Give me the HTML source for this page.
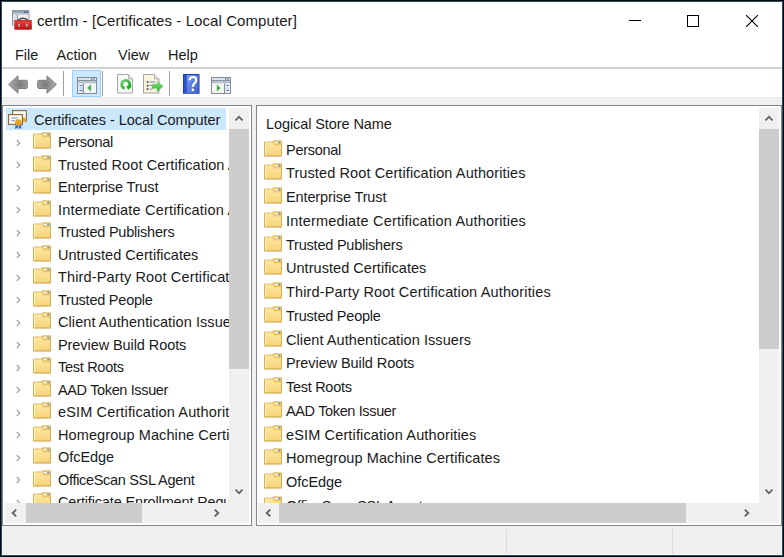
<!DOCTYPE html>
<html><head><meta charset="utf-8">
<style>
*{margin:0;padding:0;box-sizing:border-box}
html,body{width:784px;height:557px;overflow:hidden;background:#fff}
body{position:relative;font-family:"Liberation Sans",sans-serif;color:#000}
.a{position:absolute}
.t{position:absolute;white-space:nowrap;line-height:20px;font-size:14.5px;color:#1a1a1a}
.fold{position:absolute}
.chev{position:absolute}
</style></head><body>
<div class="a" style="left:0;top:0;width:784px;height:557px;background:#000"></div>
<div class="a" style="left:1px;top:1px;width:782px;height:555px;background:#1a5570"></div>
<div class="a" style="left:2px;top:2px;width:780px;height:553px;background:#fff"></div>
<svg class="a" style="left:12px;top:10px" width="21" height="21" viewBox="0 0 21 21">
<defs><linearGradient id="rb" x1="0" y1="0" x2="0" y2="1"><stop offset="0" stop-color="#e85050"/><stop offset="0.5" stop-color="#d02828"/><stop offset="1" stop-color="#b01515"/></linearGradient></defs>
<rect x="0.5" y="0.5" width="16.5" height="14.5" fill="#eef0f4" stroke="#8f97a6"/>
<rect x="1" y="1" width="16" height="2.6" fill="#9aa6ba"/>
<rect x="12" y="1.5" width="1.5" height="1.5" fill="#4a5a80"/><rect x="14.3" y="1.5" width="1.5" height="1.5" fill="#4a5a80"/>
<rect x="1" y="4" width="16" height="1" fill="#c9d0dc"/>
<rect x="1" y="5" width="4.3" height="9.5" fill="#dde2ea"/><rect x="5" y="5" width="0.8" height="10" fill="#6b7a96"/>
<path d="M6 10.2 Q11 6.2 16 10.2" fill="none" stroke="#4a4a4a" stroke-width="1.4"/>
<rect x="2.3" y="10.3" width="17.6" height="9.5" rx="1" fill="url(#rb)"/>
<rect x="2.3" y="10.3" width="17.6" height="1" fill="#c42020"/>
<ellipse cx="7" cy="15.2" rx="1" ry="1.6" fill="#a9bcbc"/><ellipse cx="14.8" cy="15.2" rx="1" ry="1.6" fill="#a9bcbc"/>
</svg>
<div class="t" style="left:37px;top:11.30px;font-size:15px;letter-spacing:0.08px">certlm - [Certificates - Local Computer]</div>
<div class="a" style="left:629px;top:20px;width:12px;height:1px;background:#000"></div>
<div class="a" style="left:687px;top:15px;width:12px;height:12px;border:1px solid #000"></div>
<svg class="a" style="left:746px;top:15px" width="12" height="12" viewBox="0 0 12 12"><path d="M0 0L12 12M12 0L0 12" stroke="#000" stroke-width="1.1"/></svg>
<div class="t" style="left:15.0px;top:45.28px">File</div>
<div class="t" style="left:56.5px;top:45.28px">Action</div>
<div class="t" style="left:118.0px;top:45.28px">View</div>
<div class="t" style="left:168.0px;top:45.28px">Help</div>
<div class="a" style="left:2px;top:67px;width:780px;height:2px;background:#cfcfcf"></div>
<svg class="a" style="left:8px;top:75px" width="20" height="19" viewBox="0 0 20 19">
<defs><radialGradient id="ag" cx="0.6" cy="0.5" r="0.6"><stop offset="0" stop-color="#787878"/><stop offset="0.6" stop-color="#9a9a9a"/><stop offset="1" stop-color="#bababa"/></radialGradient></defs>
<path d="M0.6 9.5 L10 0.8 V5.3 H18 Q19.3 5.3 19.3 6.6 V12.2 Q19.3 13.5 18 13.5 H10 V18.2 Z" fill="url(#ag)" stroke="#7c7c7c" stroke-width="1" stroke-linejoin="round"/></svg>
<svg class="a" style="left:37px;top:75px" width="20" height="19" viewBox="0 0 20 19">
<defs><radialGradient id="ag2" cx="0.4" cy="0.5" r="0.6"><stop offset="0" stop-color="#787878"/><stop offset="0.6" stop-color="#9a9a9a"/><stop offset="1" stop-color="#bababa"/></radialGradient></defs>
<path d="M19.4 9.5 L10 0.8 V5.3 H2 Q0.7 5.3 0.7 6.6 V12.2 Q0.7 13.5 2 13.5 H10 V18.2 Z" fill="url(#ag2)" stroke="#7c7c7c" stroke-width="1" stroke-linejoin="round"/></svg>
<div class="a" style="left:63px;top:71px;width:1px;height:25px;background:#a0a0a0"></div>
<div class="a" style="left:72px;top:70px;width:29px;height:27px;background:#cce8ff;border:1px solid #99d1ff"></div>
<svg class="a" style="left:77px;top:77px" width="20" height="17" viewBox="0 0 20 17">
<rect x="0.5" y="0.5" width="19" height="16" fill="#eef0f4" stroke="#858c99"/>
<rect x="1" y="1" width="18" height="2" fill="#dfe3ea"/>
<rect x="14" y="1.3" width="1.4" height="1.4" fill="#6b7385"/><rect x="16.3" y="1.3" width="1.4" height="1.4" fill="#6b7385"/>
<rect x="1" y="3" width="18" height="1.2" fill="#8a92a0"/>
<rect x="1" y="4.2" width="18" height="2.3" fill="#b9bfc9"/>
<rect x="1" y="6.5" width="4.6" height="9" fill="#eef1f5"/>
<rect x="5.6" y="6.5" width="1.4" height="9.5" fill="#8a92a0"/>
<rect x="7" y="6.5" width="12" height="9" fill="#f5f5f5"/>
<rect x="2.2" y="7.9" width="2.8" height="1" rx="0.5" fill="#3d73c4"/><rect x="2.2" y="10.4" width="2.8" height="1" rx="0.5" fill="#9fb5d8"/><rect x="2.2" y="12.9" width="2.8" height="1" rx="0.5" fill="#3d73c4"/>
<path d="M10.2 11 L14 7.6 V14.4 Z" fill="#3cb043"/></svg>
<div class="a" style="left:102px;top:71px;width:1px;height:25px;background:#a0a0a0"></div>
<svg class="a" style="left:117px;top:74px" width="17" height="20" viewBox="0 0 17 20">
<defs><linearGradient id="gr" x1="0" y1="0" x2="1" y2="1"><stop offset="0" stop-color="#6ad06a"/><stop offset="1" stop-color="#18a018"/></linearGradient></defs>
<path d="M0.5 0.5 H11.5 L15.5 4.5 V19 H0.5 Z" fill="#f7f7f7" stroke="#a8a8a8"/>
<path d="M11.5 0.5 V5 H16" fill="#e2e2e2" stroke="#b0b0b0"/>
<path d="M7.6 14.3 A4 4 0 1 1 12.3 12.3" fill="none" stroke="url(#gr)" stroke-width="2.8"/>
<path d="M9.3 11.4 L15 12.6 L11 16 Z" fill="#1cb01c"/></svg>
<svg class="a" style="left:143px;top:74px" width="21" height="20" viewBox="0 0 21 20">
<defs><linearGradient id="ge" x1="0" y1="0" x2="0" y2="1"><stop offset="0" stop-color="#86e086"/><stop offset="1" stop-color="#2db42d"/></linearGradient></defs>
<path d="M0.5 0.5 H11.5 L16 5 V19 H0.5 Z" fill="#fbf4dc" stroke="#a2a2a2"/>
<path d="M11.5 0.5 V5 H16" fill="#e8e2d0" stroke="#b0b0b0"/>
<rect x="3.8" y="7.2" width="1.6" height="1.6" fill="#333"/><rect x="6.5" y="7.5" width="6" height="1" fill="#8080c0"/>
<rect x="3.8" y="10.8" width="1.6" height="1.6" fill="#333"/><rect x="6.5" y="11" width="3" height="1" fill="#8080c0"/>
<rect x="3.8" y="14.3" width="1.6" height="1.6" fill="#333"/><rect x="6.5" y="14.6" width="3" height="1" fill="#8080c0"/>
<path d="M9 10 H14 V6.5 L20.3 12.3 L14 18 V14.6 H9 Z" fill="url(#ge)"/></svg>
<div class="a" style="left:169px;top:71px;width:1px;height:25px;background:#a0a0a0"></div>
<svg class="a" style="left:183px;top:74px" width="17" height="20" viewBox="0 0 17 20">
<defs><linearGradient id="hb" x1="0" y1="0" x2="1" y2="1"><stop offset="0" stop-color="#7a9cf0"/><stop offset="1" stop-color="#3d62d2"/></linearGradient></defs>
<rect x="0" y="0" width="16.5" height="19.8" fill="#1f3fb0"/>
<rect x="3.5" y="1" width="12" height="18" fill="url(#hb)"/>
<rect x="1" y="1" width="2.5" height="18" fill="#2b55c8"/>
<path d="M6.6 6.2 Q6.8 3 10 3 Q13.2 3 13.2 6 Q13.2 8.2 11.3 9.6 Q9.9 10.7 9.9 13" fill="none" stroke="#fff" stroke-width="2.2"/>
<circle cx="9.9" cy="15.9" r="1.35" fill="#fff"/></svg>
<svg class="a" style="left:211px;top:77px" width="20" height="17" viewBox="0 0 20 17">
<rect x="0.5" y="0.5" width="19" height="16" fill="#eef0f4" stroke="#858c99"/>
<rect x="1" y="1" width="18" height="2" fill="#dfe3ea"/>
<rect x="14" y="1.3" width="1.4" height="1.4" fill="#6b7385"/><rect x="16.3" y="1.3" width="1.4" height="1.4" fill="#6b7385"/>
<rect x="1" y="3" width="18" height="1.2" fill="#8a92a0"/>
<rect x="1" y="4.2" width="18" height="2.3" fill="#b9bfc9"/>
<rect x="1" y="6.5" width="12" height="9" fill="#f5f5f5"/>
<rect x="13" y="6.5" width="1.4" height="9.5" fill="#8a92a0"/>
<rect x="14.4" y="6.5" width="4.6" height="9" fill="#eef1f5"/>
<rect x="15.2" y="7.9" width="2.8" height="1" rx="0.5" fill="#3d73c4"/><rect x="15.2" y="10.4" width="2.8" height="1" rx="0.5" fill="#9fb5d8"/><rect x="15.2" y="12.9" width="2.8" height="1" rx="0.5" fill="#3d73c4"/>
<path d="M5.8 7.6 L9.6 11 L5.8 14.4 Z" fill="#3cb043"/></svg>
<div class="a" style="left:2px;top:97px;width:780px;height:458px;background:#f0f0f0"></div>
<div class="a" style="left:2px;top:97px;width:780px;height:1px;background:#e8e8e8"></div>
<div class="a" style="left:2px;top:105px;width:250px;height:421px;border:1px solid #828790;background:#fff;overflow:hidden">
<div class="a" style="left:0;top:0;width:226px;height:397px;overflow:hidden">
<div class="a" style="left:3px;top:2px;width:220px;height:22px;background:#cce8ff"></div>
<svg class="a" style="left:5px;top:4px" width="20" height="20" viewBox="0 0 20 20">
<rect x="4.5" y="0.5" width="14" height="10.5" fill="#fffdf5" stroke="#8a6f4a"/>
<rect x="5.5" y="1.5" width="12" height="8.5" fill="none" stroke="#e9d9b4" stroke-width="0.8"/>
<circle cx="15.6" cy="9.8" r="2.2" fill="#eaa21a"/>
<rect x="0.5" y="4.5" width="14" height="10" fill="#fffdf5" stroke="#8a6f4a"/>
<rect x="1.5" y="5.5" width="12" height="8" fill="none" stroke="#e9d9b4" stroke-width="0.8"/>
<rect x="3.3" y="7.4" width="6.5" height="1.2" fill="#8f9fd8"/><rect x="3.3" y="10" width="3.5" height="1.2" fill="#8f9fd8"/>
<path d="M7.6 14.2 L7 19 L8.8 18 L10 19 L10.2 14.2 Z M10.6 14.2 L11 19 L12.2 18 L13.6 19 L13 14.2Z" fill="#2f6fe0"/>
<circle cx="10.3" cy="12.6" r="3" fill="#f2b020" stroke="#d08a0c" stroke-width="0.7"/>
<circle cx="10.3" cy="12.6" r="1.4" fill="#e09a10"/></svg>
<div class="t" style="left:31px;top:4.28px;letter-spacing:-0.050px;">Certificates - Local Computer</div>
<svg class="chev" style="left:13.00px;top:32.60px" width="6" height="8" viewBox="0 0 6 8"><path d="M0.8 1 L3.8 4 L0.8 7" fill="none" stroke="#a0a0a0" stroke-width="1.1"/></svg>
<svg class="fold" style="left:30px;top:26.00px" width="18" height="17" viewBox="0 0 18 17"><defs><linearGradient id="fgt0" x1="0" y1="0" x2="0" y2="1"><stop offset="0" stop-color="#fee8a2"/><stop offset="1" stop-color="#f6d37a"/></linearGradient></defs>
<path d="M0.5 2.1 H8.6 L9.3 0.9 H17.5 V16.1 H0.5 Z" fill="#f1cf78" stroke="#d4ae58" stroke-width="1"/>
<rect x="9.6" y="1.4" width="7.4" height="4" fill="#e9c66a"/>
<path d="M1 2.6 H8.5 L9.8 5.4 H17 V15.6 H1 Z" fill="url(#fgt0)"/>
<rect x="1" y="2.6" width="1" height="13" fill="#fff2bc"/>
<rect x="10.6" y="2" width="3.6" height="1.2" fill="#fffbec"/>
<rect x="14.1" y="1.8" width="2.1" height="1.6" rx="0.8" fill="#4f94e6"/>
<rect x="0.5" y="15.3" width="17" height="0.8" fill="#cfa64e" opacity="0.6"/>
</svg>
<div class="t" style="left:55px;top:26.38px;letter-spacing:-0.286px;">Personal</div>
<svg class="chev" style="left:13.00px;top:55.10px" width="6" height="8" viewBox="0 0 6 8"><path d="M0.8 1 L3.8 4 L0.8 7" fill="none" stroke="#a0a0a0" stroke-width="1.1"/></svg>
<svg class="fold" style="left:30px;top:48.50px" width="18" height="17" viewBox="0 0 18 17"><defs><linearGradient id="fgt1" x1="0" y1="0" x2="0" y2="1"><stop offset="0" stop-color="#fee8a2"/><stop offset="1" stop-color="#f6d37a"/></linearGradient></defs>
<path d="M0.5 2.1 H8.6 L9.3 0.9 H17.5 V16.1 H0.5 Z" fill="#f1cf78" stroke="#d4ae58" stroke-width="1"/>
<rect x="9.6" y="1.4" width="7.4" height="4" fill="#e9c66a"/>
<path d="M1 2.6 H8.5 L9.8 5.4 H17 V15.6 H1 Z" fill="url(#fgt1)"/>
<rect x="1" y="2.6" width="1" height="13" fill="#fff2bc"/>
<rect x="10.6" y="2" width="3.6" height="1.2" fill="#fffbec"/>
<rect x="14.1" y="1.8" width="2.1" height="1.6" rx="0.8" fill="#4f94e6"/>
<rect x="0.5" y="15.3" width="17" height="0.8" fill="#cfa64e" opacity="0.6"/>
</svg>
<div class="t" style="left:55px;top:48.88px;letter-spacing:0.103px;">Trusted Root Certification Authorities</div>
<svg class="chev" style="left:13.00px;top:77.60px" width="6" height="8" viewBox="0 0 6 8"><path d="M0.8 1 L3.8 4 L0.8 7" fill="none" stroke="#a0a0a0" stroke-width="1.1"/></svg>
<svg class="fold" style="left:30px;top:71.00px" width="18" height="17" viewBox="0 0 18 17"><defs><linearGradient id="fgt2" x1="0" y1="0" x2="0" y2="1"><stop offset="0" stop-color="#fee8a2"/><stop offset="1" stop-color="#f6d37a"/></linearGradient></defs>
<path d="M0.5 2.1 H8.6 L9.3 0.9 H17.5 V16.1 H0.5 Z" fill="#f1cf78" stroke="#d4ae58" stroke-width="1"/>
<rect x="9.6" y="1.4" width="7.4" height="4" fill="#e9c66a"/>
<path d="M1 2.6 H8.5 L9.8 5.4 H17 V15.6 H1 Z" fill="url(#fgt2)"/>
<rect x="1" y="2.6" width="1" height="13" fill="#fff2bc"/>
<rect x="10.6" y="2" width="3.6" height="1.2" fill="#fffbec"/>
<rect x="14.1" y="1.8" width="2.1" height="1.6" rx="0.8" fill="#4f94e6"/>
<rect x="0.5" y="15.3" width="17" height="0.8" fill="#cfa64e" opacity="0.6"/>
</svg>
<div class="t" style="left:55px;top:71.38px;letter-spacing:-0.127px;">Enterprise Trust</div>
<svg class="chev" style="left:13.00px;top:100.10px" width="6" height="8" viewBox="0 0 6 8"><path d="M0.8 1 L3.8 4 L0.8 7" fill="none" stroke="#a0a0a0" stroke-width="1.1"/></svg>
<svg class="fold" style="left:30px;top:93.50px" width="18" height="17" viewBox="0 0 18 17"><defs><linearGradient id="fgt3" x1="0" y1="0" x2="0" y2="1"><stop offset="0" stop-color="#fee8a2"/><stop offset="1" stop-color="#f6d37a"/></linearGradient></defs>
<path d="M0.5 2.1 H8.6 L9.3 0.9 H17.5 V16.1 H0.5 Z" fill="#f1cf78" stroke="#d4ae58" stroke-width="1"/>
<rect x="9.6" y="1.4" width="7.4" height="4" fill="#e9c66a"/>
<path d="M1 2.6 H8.5 L9.8 5.4 H17 V15.6 H1 Z" fill="url(#fgt3)"/>
<rect x="1" y="2.6" width="1" height="13" fill="#fff2bc"/>
<rect x="10.6" y="2" width="3.6" height="1.2" fill="#fffbec"/>
<rect x="14.1" y="1.8" width="2.1" height="1.6" rx="0.8" fill="#4f94e6"/>
<rect x="0.5" y="15.3" width="17" height="0.8" fill="#cfa64e" opacity="0.6"/>
</svg>
<div class="t" style="left:55px;top:93.88px;letter-spacing:0.184px;">Intermediate Certification Authorities</div>
<svg class="chev" style="left:13.00px;top:122.60px" width="6" height="8" viewBox="0 0 6 8"><path d="M0.8 1 L3.8 4 L0.8 7" fill="none" stroke="#a0a0a0" stroke-width="1.1"/></svg>
<svg class="fold" style="left:30px;top:116.00px" width="18" height="17" viewBox="0 0 18 17"><defs><linearGradient id="fgt4" x1="0" y1="0" x2="0" y2="1"><stop offset="0" stop-color="#fee8a2"/><stop offset="1" stop-color="#f6d37a"/></linearGradient></defs>
<path d="M0.5 2.1 H8.6 L9.3 0.9 H17.5 V16.1 H0.5 Z" fill="#f1cf78" stroke="#d4ae58" stroke-width="1"/>
<rect x="9.6" y="1.4" width="7.4" height="4" fill="#e9c66a"/>
<path d="M1 2.6 H8.5 L9.8 5.4 H17 V15.6 H1 Z" fill="url(#fgt4)"/>
<rect x="1" y="2.6" width="1" height="13" fill="#fff2bc"/>
<rect x="10.6" y="2" width="3.6" height="1.2" fill="#fffbec"/>
<rect x="14.1" y="1.8" width="2.1" height="1.6" rx="0.8" fill="#4f94e6"/>
<rect x="0.5" y="15.3" width="17" height="0.8" fill="#cfa64e" opacity="0.6"/>
</svg>
<div class="t" style="left:55px;top:116.38px;letter-spacing:-0.218px;">Trusted Publishers</div>
<svg class="chev" style="left:13.00px;top:145.10px" width="6" height="8" viewBox="0 0 6 8"><path d="M0.8 1 L3.8 4 L0.8 7" fill="none" stroke="#a0a0a0" stroke-width="1.1"/></svg>
<svg class="fold" style="left:30px;top:138.50px" width="18" height="17" viewBox="0 0 18 17"><defs><linearGradient id="fgt5" x1="0" y1="0" x2="0" y2="1"><stop offset="0" stop-color="#fee8a2"/><stop offset="1" stop-color="#f6d37a"/></linearGradient></defs>
<path d="M0.5 2.1 H8.6 L9.3 0.9 H17.5 V16.1 H0.5 Z" fill="#f1cf78" stroke="#d4ae58" stroke-width="1"/>
<rect x="9.6" y="1.4" width="7.4" height="4" fill="#e9c66a"/>
<path d="M1 2.6 H8.5 L9.8 5.4 H17 V15.6 H1 Z" fill="url(#fgt5)"/>
<rect x="1" y="2.6" width="1" height="13" fill="#fff2bc"/>
<rect x="10.6" y="2" width="3.6" height="1.2" fill="#fffbec"/>
<rect x="14.1" y="1.8" width="2.1" height="1.6" rx="0.8" fill="#4f94e6"/>
<rect x="0.5" y="15.3" width="17" height="0.8" fill="#cfa64e" opacity="0.6"/>
</svg>
<div class="t" style="left:55px;top:138.88px;letter-spacing:0.043px;">Untrusted Certificates</div>
<svg class="chev" style="left:13.00px;top:167.60px" width="6" height="8" viewBox="0 0 6 8"><path d="M0.8 1 L3.8 4 L0.8 7" fill="none" stroke="#a0a0a0" stroke-width="1.1"/></svg>
<svg class="fold" style="left:30px;top:161.00px" width="18" height="17" viewBox="0 0 18 17"><defs><linearGradient id="fgt6" x1="0" y1="0" x2="0" y2="1"><stop offset="0" stop-color="#fee8a2"/><stop offset="1" stop-color="#f6d37a"/></linearGradient></defs>
<path d="M0.5 2.1 H8.6 L9.3 0.9 H17.5 V16.1 H0.5 Z" fill="#f1cf78" stroke="#d4ae58" stroke-width="1"/>
<rect x="9.6" y="1.4" width="7.4" height="4" fill="#e9c66a"/>
<path d="M1 2.6 H8.5 L9.8 5.4 H17 V15.6 H1 Z" fill="url(#fgt6)"/>
<rect x="1" y="2.6" width="1" height="13" fill="#fff2bc"/>
<rect x="10.6" y="2" width="3.6" height="1.2" fill="#fffbec"/>
<rect x="14.1" y="1.8" width="2.1" height="1.6" rx="0.8" fill="#4f94e6"/>
<rect x="0.5" y="15.3" width="17" height="0.8" fill="#cfa64e" opacity="0.6"/>
</svg>
<div class="t" style="left:55px;top:161.38px;letter-spacing:0.146px;">Third-Party Root Certification Authorities</div>
<svg class="chev" style="left:13.00px;top:190.10px" width="6" height="8" viewBox="0 0 6 8"><path d="M0.8 1 L3.8 4 L0.8 7" fill="none" stroke="#a0a0a0" stroke-width="1.1"/></svg>
<svg class="fold" style="left:30px;top:183.50px" width="18" height="17" viewBox="0 0 18 17"><defs><linearGradient id="fgt7" x1="0" y1="0" x2="0" y2="1"><stop offset="0" stop-color="#fee8a2"/><stop offset="1" stop-color="#f6d37a"/></linearGradient></defs>
<path d="M0.5 2.1 H8.6 L9.3 0.9 H17.5 V16.1 H0.5 Z" fill="#f1cf78" stroke="#d4ae58" stroke-width="1"/>
<rect x="9.6" y="1.4" width="7.4" height="4" fill="#e9c66a"/>
<path d="M1 2.6 H8.5 L9.8 5.4 H17 V15.6 H1 Z" fill="url(#fgt7)"/>
<rect x="1" y="2.6" width="1" height="13" fill="#fff2bc"/>
<rect x="10.6" y="2" width="3.6" height="1.2" fill="#fffbec"/>
<rect x="14.1" y="1.8" width="2.1" height="1.6" rx="0.8" fill="#4f94e6"/>
<rect x="0.5" y="15.3" width="17" height="0.8" fill="#cfa64e" opacity="0.6"/>
</svg>
<div class="t" style="left:55px;top:183.88px;letter-spacing:-0.223px;">Trusted People</div>
<svg class="chev" style="left:13.00px;top:212.60px" width="6" height="8" viewBox="0 0 6 8"><path d="M0.8 1 L3.8 4 L0.8 7" fill="none" stroke="#a0a0a0" stroke-width="1.1"/></svg>
<svg class="fold" style="left:30px;top:206.00px" width="18" height="17" viewBox="0 0 18 17"><defs><linearGradient id="fgt8" x1="0" y1="0" x2="0" y2="1"><stop offset="0" stop-color="#fee8a2"/><stop offset="1" stop-color="#f6d37a"/></linearGradient></defs>
<path d="M0.5 2.1 H8.6 L9.3 0.9 H17.5 V16.1 H0.5 Z" fill="#f1cf78" stroke="#d4ae58" stroke-width="1"/>
<rect x="9.6" y="1.4" width="7.4" height="4" fill="#e9c66a"/>
<path d="M1 2.6 H8.5 L9.8 5.4 H17 V15.6 H1 Z" fill="url(#fgt8)"/>
<rect x="1" y="2.6" width="1" height="13" fill="#fff2bc"/>
<rect x="10.6" y="2" width="3.6" height="1.2" fill="#fffbec"/>
<rect x="14.1" y="1.8" width="2.1" height="1.6" rx="0.8" fill="#4f94e6"/>
<rect x="0.5" y="15.3" width="17" height="0.8" fill="#cfa64e" opacity="0.6"/>
</svg>
<div class="t" style="left:55px;top:206.38px;letter-spacing:0.075px;">Client Authentication Issuers</div>
<svg class="chev" style="left:13.00px;top:235.10px" width="6" height="8" viewBox="0 0 6 8"><path d="M0.8 1 L3.8 4 L0.8 7" fill="none" stroke="#a0a0a0" stroke-width="1.1"/></svg>
<svg class="fold" style="left:30px;top:228.50px" width="18" height="17" viewBox="0 0 18 17"><defs><linearGradient id="fgt9" x1="0" y1="0" x2="0" y2="1"><stop offset="0" stop-color="#fee8a2"/><stop offset="1" stop-color="#f6d37a"/></linearGradient></defs>
<path d="M0.5 2.1 H8.6 L9.3 0.9 H17.5 V16.1 H0.5 Z" fill="#f1cf78" stroke="#d4ae58" stroke-width="1"/>
<rect x="9.6" y="1.4" width="7.4" height="4" fill="#e9c66a"/>
<path d="M1 2.6 H8.5 L9.8 5.4 H17 V15.6 H1 Z" fill="url(#fgt9)"/>
<rect x="1" y="2.6" width="1" height="13" fill="#fff2bc"/>
<rect x="10.6" y="2" width="3.6" height="1.2" fill="#fffbec"/>
<rect x="14.1" y="1.8" width="2.1" height="1.6" rx="0.8" fill="#4f94e6"/>
<rect x="0.5" y="15.3" width="17" height="0.8" fill="#cfa64e" opacity="0.6"/>
</svg>
<div class="t" style="left:55px;top:228.88px;letter-spacing:-0.078px;">Preview Build Roots</div>
<svg class="chev" style="left:13.00px;top:257.60px" width="6" height="8" viewBox="0 0 6 8"><path d="M0.8 1 L3.8 4 L0.8 7" fill="none" stroke="#a0a0a0" stroke-width="1.1"/></svg>
<svg class="fold" style="left:30px;top:251.00px" width="18" height="17" viewBox="0 0 18 17"><defs><linearGradient id="fgt10" x1="0" y1="0" x2="0" y2="1"><stop offset="0" stop-color="#fee8a2"/><stop offset="1" stop-color="#f6d37a"/></linearGradient></defs>
<path d="M0.5 2.1 H8.6 L9.3 0.9 H17.5 V16.1 H0.5 Z" fill="#f1cf78" stroke="#d4ae58" stroke-width="1"/>
<rect x="9.6" y="1.4" width="7.4" height="4" fill="#e9c66a"/>
<path d="M1 2.6 H8.5 L9.8 5.4 H17 V15.6 H1 Z" fill="url(#fgt10)"/>
<rect x="1" y="2.6" width="1" height="13" fill="#fff2bc"/>
<rect x="10.6" y="2" width="3.6" height="1.2" fill="#fffbec"/>
<rect x="14.1" y="1.8" width="2.1" height="1.6" rx="0.8" fill="#4f94e6"/>
<rect x="0.5" y="15.3" width="17" height="0.8" fill="#cfa64e" opacity="0.6"/>
</svg>
<div class="t" style="left:55px;top:251.38px;letter-spacing:-0.289px;">Test Roots</div>
<svg class="chev" style="left:13.00px;top:280.10px" width="6" height="8" viewBox="0 0 6 8"><path d="M0.8 1 L3.8 4 L0.8 7" fill="none" stroke="#a0a0a0" stroke-width="1.1"/></svg>
<svg class="fold" style="left:30px;top:273.50px" width="18" height="17" viewBox="0 0 18 17"><defs><linearGradient id="fgt11" x1="0" y1="0" x2="0" y2="1"><stop offset="0" stop-color="#fee8a2"/><stop offset="1" stop-color="#f6d37a"/></linearGradient></defs>
<path d="M0.5 2.1 H8.6 L9.3 0.9 H17.5 V16.1 H0.5 Z" fill="#f1cf78" stroke="#d4ae58" stroke-width="1"/>
<rect x="9.6" y="1.4" width="7.4" height="4" fill="#e9c66a"/>
<path d="M1 2.6 H8.5 L9.8 5.4 H17 V15.6 H1 Z" fill="url(#fgt11)"/>
<rect x="1" y="2.6" width="1" height="13" fill="#fff2bc"/>
<rect x="10.6" y="2" width="3.6" height="1.2" fill="#fffbec"/>
<rect x="14.1" y="1.8" width="2.1" height="1.6" rx="0.8" fill="#4f94e6"/>
<rect x="0.5" y="15.3" width="17" height="0.8" fill="#cfa64e" opacity="0.6"/>
</svg>
<div class="t" style="left:55px;top:273.88px;letter-spacing:-0.360px;">AAD Token Issuer</div>
<svg class="chev" style="left:13.00px;top:302.60px" width="6" height="8" viewBox="0 0 6 8"><path d="M0.8 1 L3.8 4 L0.8 7" fill="none" stroke="#a0a0a0" stroke-width="1.1"/></svg>
<svg class="fold" style="left:30px;top:296.00px" width="18" height="17" viewBox="0 0 18 17"><defs><linearGradient id="fgt12" x1="0" y1="0" x2="0" y2="1"><stop offset="0" stop-color="#fee8a2"/><stop offset="1" stop-color="#f6d37a"/></linearGradient></defs>
<path d="M0.5 2.1 H8.6 L9.3 0.9 H17.5 V16.1 H0.5 Z" fill="#f1cf78" stroke="#d4ae58" stroke-width="1"/>
<rect x="9.6" y="1.4" width="7.4" height="4" fill="#e9c66a"/>
<path d="M1 2.6 H8.5 L9.8 5.4 H17 V15.6 H1 Z" fill="url(#fgt12)"/>
<rect x="1" y="2.6" width="1" height="13" fill="#fff2bc"/>
<rect x="10.6" y="2" width="3.6" height="1.2" fill="#fffbec"/>
<rect x="14.1" y="1.8" width="2.1" height="1.6" rx="0.8" fill="#4f94e6"/>
<rect x="0.5" y="15.3" width="17" height="0.8" fill="#cfa64e" opacity="0.6"/>
</svg>
<div class="t" style="left:55px;top:296.38px;letter-spacing:0.141px;">eSIM Certification Authorities</div>
<svg class="chev" style="left:13.00px;top:325.10px" width="6" height="8" viewBox="0 0 6 8"><path d="M0.8 1 L3.8 4 L0.8 7" fill="none" stroke="#a0a0a0" stroke-width="1.1"/></svg>
<svg class="fold" style="left:30px;top:318.50px" width="18" height="17" viewBox="0 0 18 17"><defs><linearGradient id="fgt13" x1="0" y1="0" x2="0" y2="1"><stop offset="0" stop-color="#fee8a2"/><stop offset="1" stop-color="#f6d37a"/></linearGradient></defs>
<path d="M0.5 2.1 H8.6 L9.3 0.9 H17.5 V16.1 H0.5 Z" fill="#f1cf78" stroke="#d4ae58" stroke-width="1"/>
<rect x="9.6" y="1.4" width="7.4" height="4" fill="#e9c66a"/>
<path d="M1 2.6 H8.5 L9.8 5.4 H17 V15.6 H1 Z" fill="url(#fgt13)"/>
<rect x="1" y="2.6" width="1" height="13" fill="#fff2bc"/>
<rect x="10.6" y="2" width="3.6" height="1.2" fill="#fffbec"/>
<rect x="14.1" y="1.8" width="2.1" height="1.6" rx="0.8" fill="#4f94e6"/>
<rect x="0.5" y="15.3" width="17" height="0.8" fill="#cfa64e" opacity="0.6"/>
</svg>
<div class="t" style="left:55px;top:318.88px;letter-spacing:0.097px;">Homegroup Machine Certificates</div>
<svg class="chev" style="left:13.00px;top:347.60px" width="6" height="8" viewBox="0 0 6 8"><path d="M0.8 1 L3.8 4 L0.8 7" fill="none" stroke="#a0a0a0" stroke-width="1.1"/></svg>
<svg class="fold" style="left:30px;top:341.00px" width="18" height="17" viewBox="0 0 18 17"><defs><linearGradient id="fgt14" x1="0" y1="0" x2="0" y2="1"><stop offset="0" stop-color="#fee8a2"/><stop offset="1" stop-color="#f6d37a"/></linearGradient></defs>
<path d="M0.5 2.1 H8.6 L9.3 0.9 H17.5 V16.1 H0.5 Z" fill="#f1cf78" stroke="#d4ae58" stroke-width="1"/>
<rect x="9.6" y="1.4" width="7.4" height="4" fill="#e9c66a"/>
<path d="M1 2.6 H8.5 L9.8 5.4 H17 V15.6 H1 Z" fill="url(#fgt14)"/>
<rect x="1" y="2.6" width="1" height="13" fill="#fff2bc"/>
<rect x="10.6" y="2" width="3.6" height="1.2" fill="#fffbec"/>
<rect x="14.1" y="1.8" width="2.1" height="1.6" rx="0.8" fill="#4f94e6"/>
<rect x="0.5" y="15.3" width="17" height="0.8" fill="#cfa64e" opacity="0.6"/>
</svg>
<div class="t" style="left:55px;top:341.38px;letter-spacing:-0.050px;">OfcEdge</div>
<svg class="chev" style="left:13.00px;top:370.10px" width="6" height="8" viewBox="0 0 6 8"><path d="M0.8 1 L3.8 4 L0.8 7" fill="none" stroke="#a0a0a0" stroke-width="1.1"/></svg>
<svg class="fold" style="left:30px;top:363.50px" width="18" height="17" viewBox="0 0 18 17"><defs><linearGradient id="fgt15" x1="0" y1="0" x2="0" y2="1"><stop offset="0" stop-color="#fee8a2"/><stop offset="1" stop-color="#f6d37a"/></linearGradient></defs>
<path d="M0.5 2.1 H8.6 L9.3 0.9 H17.5 V16.1 H0.5 Z" fill="#f1cf78" stroke="#d4ae58" stroke-width="1"/>
<rect x="9.6" y="1.4" width="7.4" height="4" fill="#e9c66a"/>
<path d="M1 2.6 H8.5 L9.8 5.4 H17 V15.6 H1 Z" fill="url(#fgt15)"/>
<rect x="1" y="2.6" width="1" height="13" fill="#fff2bc"/>
<rect x="10.6" y="2" width="3.6" height="1.2" fill="#fffbec"/>
<rect x="14.1" y="1.8" width="2.1" height="1.6" rx="0.8" fill="#4f94e6"/>
<rect x="0.5" y="15.3" width="17" height="0.8" fill="#cfa64e" opacity="0.6"/>
</svg>
<div class="t" style="left:55px;top:363.88px;letter-spacing:-0.316px;">OfficeScan SSL Agent</div>
<svg class="chev" style="left:13.00px;top:392.60px" width="6" height="8" viewBox="0 0 6 8"><path d="M0.8 1 L3.8 4 L0.8 7" fill="none" stroke="#a0a0a0" stroke-width="1.1"/></svg>
<svg class="fold" style="left:30px;top:386.00px" width="18" height="17" viewBox="0 0 18 17"><defs><linearGradient id="fgt16" x1="0" y1="0" x2="0" y2="1"><stop offset="0" stop-color="#fee8a2"/><stop offset="1" stop-color="#f6d37a"/></linearGradient></defs>
<path d="M0.5 2.1 H8.6 L9.3 0.9 H17.5 V16.1 H0.5 Z" fill="#f1cf78" stroke="#d4ae58" stroke-width="1"/>
<rect x="9.6" y="1.4" width="7.4" height="4" fill="#e9c66a"/>
<path d="M1 2.6 H8.5 L9.8 5.4 H17 V15.6 H1 Z" fill="url(#fgt16)"/>
<rect x="1" y="2.6" width="1" height="13" fill="#fff2bc"/>
<rect x="10.6" y="2" width="3.6" height="1.2" fill="#fffbec"/>
<rect x="14.1" y="1.8" width="2.1" height="1.6" rx="0.8" fill="#4f94e6"/>
<rect x="0.5" y="15.3" width="17" height="0.8" fill="#cfa64e" opacity="0.6"/>
</svg>
<div class="t" style="left:55px;top:386.38px;letter-spacing:-0.150px;">Certificate Enrollment Requests</div>
</div>
<div class="a" style="left:226px;top:2px;width:20px;height:415px;background:#f0f0f0"></div>
<div class="a" style="left:226px;top:23px;width:20px;height:240px;background:#cdcdcd"></div>
<div class="a" style="left:2px;top:397px;width:224px;height:20px;background:#f0f0f0"></div>
<div class="a" style="left:23px;top:397px;width:116px;height:20px;background:#cdcdcd"></div>
<svg class="a" style="left:230.70px;top:8.00px" width="10" height="8" viewBox="0 0 10 8"><path d="M1.6 6.3 L5 2.7 L8.4 6.3" fill="none" stroke="#606060" stroke-width="1.8"/></svg>
<svg class="a" style="left:230.80px;top:382.00px" width="10" height="8" viewBox="0 0 10 8"><path d="M1.6 1.7 L5 5.3 L8.4 1.7" fill="none" stroke="#606060" stroke-width="1.8"/></svg>
<svg class="a" style="left:7.20px;top:401.50px" width="8" height="10" viewBox="0 0 8 10"><path d="M6.2 1.7 L2.7 5 L6.2 8.3" fill="none" stroke="#606060" stroke-width="1.8"/></svg>
<svg class="a" style="left:209.50px;top:401.50px" width="8" height="10" viewBox="0 0 8 10"><path d="M1.8 1.7 L5.3 5 L1.8 8.3" fill="none" stroke="#606060" stroke-width="1.8"/></svg>
</div>
<div class="a" style="left:256px;top:105px;width:526px;height:421px;border:1px solid #828790;background:#fff;overflow:hidden">
<div class="a" style="left:0;top:0;width:502px;height:397px;overflow:hidden">
<div class="t" style="left:9px;top:7.68px;letter-spacing:-0.088px;">Logical Store Name</div>
<svg class="fold" style="left:7px;top:33.60px" width="18" height="17" viewBox="0 0 18 17"><defs><linearGradient id="fgl0" x1="0" y1="0" x2="0" y2="1"><stop offset="0" stop-color="#fee8a2"/><stop offset="1" stop-color="#f6d37a"/></linearGradient></defs>
<path d="M0.5 2.1 H8.6 L9.3 0.9 H17.5 V16.1 H0.5 Z" fill="#f1cf78" stroke="#d4ae58" stroke-width="1"/>
<rect x="9.6" y="1.4" width="7.4" height="4" fill="#e9c66a"/>
<path d="M1 2.6 H8.5 L9.8 5.4 H17 V15.6 H1 Z" fill="url(#fgl0)"/>
<rect x="1" y="2.6" width="1" height="13" fill="#fff2bc"/>
<rect x="10.6" y="2" width="3.6" height="1.2" fill="#fffbec"/>
<rect x="14.1" y="1.8" width="2.1" height="1.6" rx="0.8" fill="#4f94e6"/>
<rect x="0.5" y="15.3" width="17" height="0.8" fill="#cfa64e" opacity="0.6"/>
</svg>
<div class="t" style="left:29px;top:33.58px;letter-spacing:-0.286px;">Personal</div>
<svg class="fold" style="left:7px;top:57.35px" width="18" height="17" viewBox="0 0 18 17"><defs><linearGradient id="fgl1" x1="0" y1="0" x2="0" y2="1"><stop offset="0" stop-color="#fee8a2"/><stop offset="1" stop-color="#f6d37a"/></linearGradient></defs>
<path d="M0.5 2.1 H8.6 L9.3 0.9 H17.5 V16.1 H0.5 Z" fill="#f1cf78" stroke="#d4ae58" stroke-width="1"/>
<rect x="9.6" y="1.4" width="7.4" height="4" fill="#e9c66a"/>
<path d="M1 2.6 H8.5 L9.8 5.4 H17 V15.6 H1 Z" fill="url(#fgl1)"/>
<rect x="1" y="2.6" width="1" height="13" fill="#fff2bc"/>
<rect x="10.6" y="2" width="3.6" height="1.2" fill="#fffbec"/>
<rect x="14.1" y="1.8" width="2.1" height="1.6" rx="0.8" fill="#4f94e6"/>
<rect x="0.5" y="15.3" width="17" height="0.8" fill="#cfa64e" opacity="0.6"/>
</svg>
<div class="t" style="left:29px;top:57.33px;letter-spacing:0.103px;">Trusted Root Certification Authorities</div>
<svg class="fold" style="left:7px;top:81.10px" width="18" height="17" viewBox="0 0 18 17"><defs><linearGradient id="fgl2" x1="0" y1="0" x2="0" y2="1"><stop offset="0" stop-color="#fee8a2"/><stop offset="1" stop-color="#f6d37a"/></linearGradient></defs>
<path d="M0.5 2.1 H8.6 L9.3 0.9 H17.5 V16.1 H0.5 Z" fill="#f1cf78" stroke="#d4ae58" stroke-width="1"/>
<rect x="9.6" y="1.4" width="7.4" height="4" fill="#e9c66a"/>
<path d="M1 2.6 H8.5 L9.8 5.4 H17 V15.6 H1 Z" fill="url(#fgl2)"/>
<rect x="1" y="2.6" width="1" height="13" fill="#fff2bc"/>
<rect x="10.6" y="2" width="3.6" height="1.2" fill="#fffbec"/>
<rect x="14.1" y="1.8" width="2.1" height="1.6" rx="0.8" fill="#4f94e6"/>
<rect x="0.5" y="15.3" width="17" height="0.8" fill="#cfa64e" opacity="0.6"/>
</svg>
<div class="t" style="left:29px;top:81.08px;letter-spacing:-0.127px;">Enterprise Trust</div>
<svg class="fold" style="left:7px;top:104.85px" width="18" height="17" viewBox="0 0 18 17"><defs><linearGradient id="fgl3" x1="0" y1="0" x2="0" y2="1"><stop offset="0" stop-color="#fee8a2"/><stop offset="1" stop-color="#f6d37a"/></linearGradient></defs>
<path d="M0.5 2.1 H8.6 L9.3 0.9 H17.5 V16.1 H0.5 Z" fill="#f1cf78" stroke="#d4ae58" stroke-width="1"/>
<rect x="9.6" y="1.4" width="7.4" height="4" fill="#e9c66a"/>
<path d="M1 2.6 H8.5 L9.8 5.4 H17 V15.6 H1 Z" fill="url(#fgl3)"/>
<rect x="1" y="2.6" width="1" height="13" fill="#fff2bc"/>
<rect x="10.6" y="2" width="3.6" height="1.2" fill="#fffbec"/>
<rect x="14.1" y="1.8" width="2.1" height="1.6" rx="0.8" fill="#4f94e6"/>
<rect x="0.5" y="15.3" width="17" height="0.8" fill="#cfa64e" opacity="0.6"/>
</svg>
<div class="t" style="left:29px;top:104.83px;letter-spacing:0.184px;">Intermediate Certification Authorities</div>
<svg class="fold" style="left:7px;top:128.60px" width="18" height="17" viewBox="0 0 18 17"><defs><linearGradient id="fgl4" x1="0" y1="0" x2="0" y2="1"><stop offset="0" stop-color="#fee8a2"/><stop offset="1" stop-color="#f6d37a"/></linearGradient></defs>
<path d="M0.5 2.1 H8.6 L9.3 0.9 H17.5 V16.1 H0.5 Z" fill="#f1cf78" stroke="#d4ae58" stroke-width="1"/>
<rect x="9.6" y="1.4" width="7.4" height="4" fill="#e9c66a"/>
<path d="M1 2.6 H8.5 L9.8 5.4 H17 V15.6 H1 Z" fill="url(#fgl4)"/>
<rect x="1" y="2.6" width="1" height="13" fill="#fff2bc"/>
<rect x="10.6" y="2" width="3.6" height="1.2" fill="#fffbec"/>
<rect x="14.1" y="1.8" width="2.1" height="1.6" rx="0.8" fill="#4f94e6"/>
<rect x="0.5" y="15.3" width="17" height="0.8" fill="#cfa64e" opacity="0.6"/>
</svg>
<div class="t" style="left:29px;top:128.58px;letter-spacing:-0.218px;">Trusted Publishers</div>
<svg class="fold" style="left:7px;top:152.35px" width="18" height="17" viewBox="0 0 18 17"><defs><linearGradient id="fgl5" x1="0" y1="0" x2="0" y2="1"><stop offset="0" stop-color="#fee8a2"/><stop offset="1" stop-color="#f6d37a"/></linearGradient></defs>
<path d="M0.5 2.1 H8.6 L9.3 0.9 H17.5 V16.1 H0.5 Z" fill="#f1cf78" stroke="#d4ae58" stroke-width="1"/>
<rect x="9.6" y="1.4" width="7.4" height="4" fill="#e9c66a"/>
<path d="M1 2.6 H8.5 L9.8 5.4 H17 V15.6 H1 Z" fill="url(#fgl5)"/>
<rect x="1" y="2.6" width="1" height="13" fill="#fff2bc"/>
<rect x="10.6" y="2" width="3.6" height="1.2" fill="#fffbec"/>
<rect x="14.1" y="1.8" width="2.1" height="1.6" rx="0.8" fill="#4f94e6"/>
<rect x="0.5" y="15.3" width="17" height="0.8" fill="#cfa64e" opacity="0.6"/>
</svg>
<div class="t" style="left:29px;top:152.33px;letter-spacing:0.043px;">Untrusted Certificates</div>
<svg class="fold" style="left:7px;top:176.10px" width="18" height="17" viewBox="0 0 18 17"><defs><linearGradient id="fgl6" x1="0" y1="0" x2="0" y2="1"><stop offset="0" stop-color="#fee8a2"/><stop offset="1" stop-color="#f6d37a"/></linearGradient></defs>
<path d="M0.5 2.1 H8.6 L9.3 0.9 H17.5 V16.1 H0.5 Z" fill="#f1cf78" stroke="#d4ae58" stroke-width="1"/>
<rect x="9.6" y="1.4" width="7.4" height="4" fill="#e9c66a"/>
<path d="M1 2.6 H8.5 L9.8 5.4 H17 V15.6 H1 Z" fill="url(#fgl6)"/>
<rect x="1" y="2.6" width="1" height="13" fill="#fff2bc"/>
<rect x="10.6" y="2" width="3.6" height="1.2" fill="#fffbec"/>
<rect x="14.1" y="1.8" width="2.1" height="1.6" rx="0.8" fill="#4f94e6"/>
<rect x="0.5" y="15.3" width="17" height="0.8" fill="#cfa64e" opacity="0.6"/>
</svg>
<div class="t" style="left:29px;top:176.08px;letter-spacing:0.146px;">Third-Party Root Certification Authorities</div>
<svg class="fold" style="left:7px;top:199.85px" width="18" height="17" viewBox="0 0 18 17"><defs><linearGradient id="fgl7" x1="0" y1="0" x2="0" y2="1"><stop offset="0" stop-color="#fee8a2"/><stop offset="1" stop-color="#f6d37a"/></linearGradient></defs>
<path d="M0.5 2.1 H8.6 L9.3 0.9 H17.5 V16.1 H0.5 Z" fill="#f1cf78" stroke="#d4ae58" stroke-width="1"/>
<rect x="9.6" y="1.4" width="7.4" height="4" fill="#e9c66a"/>
<path d="M1 2.6 H8.5 L9.8 5.4 H17 V15.6 H1 Z" fill="url(#fgl7)"/>
<rect x="1" y="2.6" width="1" height="13" fill="#fff2bc"/>
<rect x="10.6" y="2" width="3.6" height="1.2" fill="#fffbec"/>
<rect x="14.1" y="1.8" width="2.1" height="1.6" rx="0.8" fill="#4f94e6"/>
<rect x="0.5" y="15.3" width="17" height="0.8" fill="#cfa64e" opacity="0.6"/>
</svg>
<div class="t" style="left:29px;top:199.83px;letter-spacing:-0.223px;">Trusted People</div>
<svg class="fold" style="left:7px;top:223.60px" width="18" height="17" viewBox="0 0 18 17"><defs><linearGradient id="fgl8" x1="0" y1="0" x2="0" y2="1"><stop offset="0" stop-color="#fee8a2"/><stop offset="1" stop-color="#f6d37a"/></linearGradient></defs>
<path d="M0.5 2.1 H8.6 L9.3 0.9 H17.5 V16.1 H0.5 Z" fill="#f1cf78" stroke="#d4ae58" stroke-width="1"/>
<rect x="9.6" y="1.4" width="7.4" height="4" fill="#e9c66a"/>
<path d="M1 2.6 H8.5 L9.8 5.4 H17 V15.6 H1 Z" fill="url(#fgl8)"/>
<rect x="1" y="2.6" width="1" height="13" fill="#fff2bc"/>
<rect x="10.6" y="2" width="3.6" height="1.2" fill="#fffbec"/>
<rect x="14.1" y="1.8" width="2.1" height="1.6" rx="0.8" fill="#4f94e6"/>
<rect x="0.5" y="15.3" width="17" height="0.8" fill="#cfa64e" opacity="0.6"/>
</svg>
<div class="t" style="left:29px;top:223.58px;letter-spacing:0.075px;">Client Authentication Issuers</div>
<svg class="fold" style="left:7px;top:247.35px" width="18" height="17" viewBox="0 0 18 17"><defs><linearGradient id="fgl9" x1="0" y1="0" x2="0" y2="1"><stop offset="0" stop-color="#fee8a2"/><stop offset="1" stop-color="#f6d37a"/></linearGradient></defs>
<path d="M0.5 2.1 H8.6 L9.3 0.9 H17.5 V16.1 H0.5 Z" fill="#f1cf78" stroke="#d4ae58" stroke-width="1"/>
<rect x="9.6" y="1.4" width="7.4" height="4" fill="#e9c66a"/>
<path d="M1 2.6 H8.5 L9.8 5.4 H17 V15.6 H1 Z" fill="url(#fgl9)"/>
<rect x="1" y="2.6" width="1" height="13" fill="#fff2bc"/>
<rect x="10.6" y="2" width="3.6" height="1.2" fill="#fffbec"/>
<rect x="14.1" y="1.8" width="2.1" height="1.6" rx="0.8" fill="#4f94e6"/>
<rect x="0.5" y="15.3" width="17" height="0.8" fill="#cfa64e" opacity="0.6"/>
</svg>
<div class="t" style="left:29px;top:247.33px;letter-spacing:-0.078px;">Preview Build Roots</div>
<svg class="fold" style="left:7px;top:271.10px" width="18" height="17" viewBox="0 0 18 17"><defs><linearGradient id="fgl10" x1="0" y1="0" x2="0" y2="1"><stop offset="0" stop-color="#fee8a2"/><stop offset="1" stop-color="#f6d37a"/></linearGradient></defs>
<path d="M0.5 2.1 H8.6 L9.3 0.9 H17.5 V16.1 H0.5 Z" fill="#f1cf78" stroke="#d4ae58" stroke-width="1"/>
<rect x="9.6" y="1.4" width="7.4" height="4" fill="#e9c66a"/>
<path d="M1 2.6 H8.5 L9.8 5.4 H17 V15.6 H1 Z" fill="url(#fgl10)"/>
<rect x="1" y="2.6" width="1" height="13" fill="#fff2bc"/>
<rect x="10.6" y="2" width="3.6" height="1.2" fill="#fffbec"/>
<rect x="14.1" y="1.8" width="2.1" height="1.6" rx="0.8" fill="#4f94e6"/>
<rect x="0.5" y="15.3" width="17" height="0.8" fill="#cfa64e" opacity="0.6"/>
</svg>
<div class="t" style="left:29px;top:271.08px;letter-spacing:-0.289px;">Test Roots</div>
<svg class="fold" style="left:7px;top:294.85px" width="18" height="17" viewBox="0 0 18 17"><defs><linearGradient id="fgl11" x1="0" y1="0" x2="0" y2="1"><stop offset="0" stop-color="#fee8a2"/><stop offset="1" stop-color="#f6d37a"/></linearGradient></defs>
<path d="M0.5 2.1 H8.6 L9.3 0.9 H17.5 V16.1 H0.5 Z" fill="#f1cf78" stroke="#d4ae58" stroke-width="1"/>
<rect x="9.6" y="1.4" width="7.4" height="4" fill="#e9c66a"/>
<path d="M1 2.6 H8.5 L9.8 5.4 H17 V15.6 H1 Z" fill="url(#fgl11)"/>
<rect x="1" y="2.6" width="1" height="13" fill="#fff2bc"/>
<rect x="10.6" y="2" width="3.6" height="1.2" fill="#fffbec"/>
<rect x="14.1" y="1.8" width="2.1" height="1.6" rx="0.8" fill="#4f94e6"/>
<rect x="0.5" y="15.3" width="17" height="0.8" fill="#cfa64e" opacity="0.6"/>
</svg>
<div class="t" style="left:29px;top:294.83px;letter-spacing:-0.360px;">AAD Token Issuer</div>
<svg class="fold" style="left:7px;top:318.60px" width="18" height="17" viewBox="0 0 18 17"><defs><linearGradient id="fgl12" x1="0" y1="0" x2="0" y2="1"><stop offset="0" stop-color="#fee8a2"/><stop offset="1" stop-color="#f6d37a"/></linearGradient></defs>
<path d="M0.5 2.1 H8.6 L9.3 0.9 H17.5 V16.1 H0.5 Z" fill="#f1cf78" stroke="#d4ae58" stroke-width="1"/>
<rect x="9.6" y="1.4" width="7.4" height="4" fill="#e9c66a"/>
<path d="M1 2.6 H8.5 L9.8 5.4 H17 V15.6 H1 Z" fill="url(#fgl12)"/>
<rect x="1" y="2.6" width="1" height="13" fill="#fff2bc"/>
<rect x="10.6" y="2" width="3.6" height="1.2" fill="#fffbec"/>
<rect x="14.1" y="1.8" width="2.1" height="1.6" rx="0.8" fill="#4f94e6"/>
<rect x="0.5" y="15.3" width="17" height="0.8" fill="#cfa64e" opacity="0.6"/>
</svg>
<div class="t" style="left:29px;top:318.58px;letter-spacing:0.141px;">eSIM Certification Authorities</div>
<svg class="fold" style="left:7px;top:342.35px" width="18" height="17" viewBox="0 0 18 17"><defs><linearGradient id="fgl13" x1="0" y1="0" x2="0" y2="1"><stop offset="0" stop-color="#fee8a2"/><stop offset="1" stop-color="#f6d37a"/></linearGradient></defs>
<path d="M0.5 2.1 H8.6 L9.3 0.9 H17.5 V16.1 H0.5 Z" fill="#f1cf78" stroke="#d4ae58" stroke-width="1"/>
<rect x="9.6" y="1.4" width="7.4" height="4" fill="#e9c66a"/>
<path d="M1 2.6 H8.5 L9.8 5.4 H17 V15.6 H1 Z" fill="url(#fgl13)"/>
<rect x="1" y="2.6" width="1" height="13" fill="#fff2bc"/>
<rect x="10.6" y="2" width="3.6" height="1.2" fill="#fffbec"/>
<rect x="14.1" y="1.8" width="2.1" height="1.6" rx="0.8" fill="#4f94e6"/>
<rect x="0.5" y="15.3" width="17" height="0.8" fill="#cfa64e" opacity="0.6"/>
</svg>
<div class="t" style="left:29px;top:342.33px;letter-spacing:0.097px;">Homegroup Machine Certificates</div>
<svg class="fold" style="left:7px;top:366.10px" width="18" height="17" viewBox="0 0 18 17"><defs><linearGradient id="fgl14" x1="0" y1="0" x2="0" y2="1"><stop offset="0" stop-color="#fee8a2"/><stop offset="1" stop-color="#f6d37a"/></linearGradient></defs>
<path d="M0.5 2.1 H8.6 L9.3 0.9 H17.5 V16.1 H0.5 Z" fill="#f1cf78" stroke="#d4ae58" stroke-width="1"/>
<rect x="9.6" y="1.4" width="7.4" height="4" fill="#e9c66a"/>
<path d="M1 2.6 H8.5 L9.8 5.4 H17 V15.6 H1 Z" fill="url(#fgl14)"/>
<rect x="1" y="2.6" width="1" height="13" fill="#fff2bc"/>
<rect x="10.6" y="2" width="3.6" height="1.2" fill="#fffbec"/>
<rect x="14.1" y="1.8" width="2.1" height="1.6" rx="0.8" fill="#4f94e6"/>
<rect x="0.5" y="15.3" width="17" height="0.8" fill="#cfa64e" opacity="0.6"/>
</svg>
<div class="t" style="left:29px;top:366.08px;letter-spacing:-0.050px;">OfcEdge</div>
<svg class="fold" style="left:7px;top:389.85px" width="18" height="17" viewBox="0 0 18 17"><defs><linearGradient id="fgl15" x1="0" y1="0" x2="0" y2="1"><stop offset="0" stop-color="#fee8a2"/><stop offset="1" stop-color="#f6d37a"/></linearGradient></defs>
<path d="M0.5 2.1 H8.6 L9.3 0.9 H17.5 V16.1 H0.5 Z" fill="#f1cf78" stroke="#d4ae58" stroke-width="1"/>
<rect x="9.6" y="1.4" width="7.4" height="4" fill="#e9c66a"/>
<path d="M1 2.6 H8.5 L9.8 5.4 H17 V15.6 H1 Z" fill="url(#fgl15)"/>
<rect x="1" y="2.6" width="1" height="13" fill="#fff2bc"/>
<rect x="10.6" y="2" width="3.6" height="1.2" fill="#fffbec"/>
<rect x="14.1" y="1.8" width="2.1" height="1.6" rx="0.8" fill="#4f94e6"/>
<rect x="0.5" y="15.3" width="17" height="0.8" fill="#cfa64e" opacity="0.6"/>
</svg>
<div class="t" style="left:29px;top:389.83px;letter-spacing:-0.316px;">OfficeScan SSL Agent</div>
</div>
<div class="a" style="left:502px;top:2px;width:20px;height:415px;background:#f0f0f0"></div>
<div class="a" style="left:502px;top:23px;width:20px;height:220px;background:#cdcdcd"></div>
<div class="a" style="left:1px;top:397px;width:521px;height:20px;background:#f0f0f0"></div>
<div class="a" style="left:22px;top:397px;width:407px;height:20px;background:#cdcdcd"></div>
<svg class="a" style="left:506.70px;top:8.00px" width="10" height="8" viewBox="0 0 10 8"><path d="M1.6 6.3 L5 2.7 L8.4 6.3" fill="none" stroke="#606060" stroke-width="1.8"/></svg>
<svg class="a" style="left:506.80px;top:382.00px" width="10" height="8" viewBox="0 0 10 8"><path d="M1.6 1.7 L5 5.3 L8.4 1.7" fill="none" stroke="#606060" stroke-width="1.8"/></svg>
<svg class="a" style="left:7.30px;top:401.50px" width="8" height="10" viewBox="0 0 8 10"><path d="M6.2 1.7 L2.7 5 L6.2 8.3" fill="none" stroke="#606060" stroke-width="1.8"/></svg>
<svg class="a" style="left:485.70px;top:401.50px" width="8" height="10" viewBox="0 0 8 10"><path d="M1.8 1.7 L5.3 5 L1.8 8.3" fill="none" stroke="#606060" stroke-width="1.8"/></svg>
</div>
<div class="a" style="left:506px;top:529px;width:1px;height:25px;background:#dadada"></div>
<div class="a" style="left:672px;top:529px;width:1px;height:25px;background:#dadada"></div>
<div class="a" style="left:2px;top:554px;width:780px;height:1px;background:#fff"></div>
</body></html>
